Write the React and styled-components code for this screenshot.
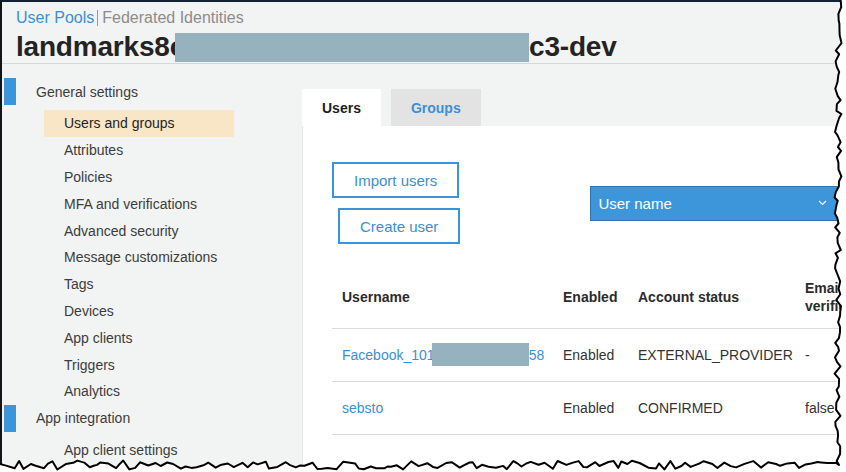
import React from "react";
import styled, { createGlobalStyle } from "styled-components";

const GlobalStyle = createGlobalStyle`
  html, body { margin: 0; padding: 0; background: #ffffff; }
  body { font-family: "Liberation Sans", Arial, Helvetica, sans-serif; }
  * { box-sizing: border-box; }
`;

const BLUE = "#3b8fd6";

const Stage = styled.div`
  position: relative;
  width: 846px;
  height: 472px;
  overflow: hidden;
  background: #ffffff;
`;

const Screen = styled.div`
  width: 846px;
  height: 472px;
  display: flex;
  flex-direction: column;
  background: #f2f3f3;
  border-left: 2px solid #111418;
  border-top: 2px solid #142033;
`;

const Header = styled.header`
  height: 62px;
  flex: none;
  padding: 6px 14px 0;
  border-bottom: 1px solid #d6d8d8;
`;

const Crumbs = styled.div`
  display: flex;
  align-items: center;
  height: 20px;
  font-size: 16px;
`;

const CrumbLink = styled.span`
  color: ${BLUE};
`;

const CrumbSep = styled.span`
  width: 1px;
  height: 16px;
  background: #9a9a9a;
  margin: 0 4px 0 3px;
`;

const CrumbMuted = styled.span`
  color: #8c8c8c;
`;

const Title = styled.h1`
  margin: 2px 0 0;
  display: flex;
  align-items: center;
  height: 34px;
  font-size: 28px;
  font-weight: 700;
  letter-spacing: -0.2px;
  color: #232323;
  white-space: nowrap;
`;

const Redact = styled.span`
  display: inline-block;
  flex: none;
  background: #97b2bf;
  width: ${(p) => p.$w}px;
  height: ${(p) => p.$h}px;
  margin-left: ${(p) => p.$ml || 0}px;
  vertical-align: middle;
`;

const Body = styled.div`
  flex: 1;
  display: grid;
  grid-template-columns: 300px 1fr;
  min-height: 0;
`;

const Sidebar = styled.nav`
  padding-top: 14px;
  display: flex;
  flex-direction: column;
`;

const SectionHead = styled.div`
  display: flex;
  align-items: center;
  height: 27px;
  margin-bottom: 5px;
  font-size: 14px;
  color: #3c3c3c;
`;

const Marker = styled.span`
  width: 12px;
  height: 27px;
  margin: 0 20px 0 2px;
  background: #3d95d9;
`;

const NavList = styled.ul`
  list-style: none;
  margin: 0;
  padding: 0 0 0 42px;
`;

const NavItem = styled.li`
  width: 190px;
  height: 26.8px;
  display: flex;
  align-items: center;
  padding-left: 20px;
  font-size: 14px;
  color: ${(p) => (p.$active ? "#1f1f1f" : "#3c3c3c")};
  background: ${(p) => (p.$active ? "#f9e6c7" : "transparent")};
`;

const Main = styled.main`
  padding-top: 25px;
  display: flex;
  flex-direction: column;
  min-width: 0;
`;

const Tabs = styled.div`
  display: flex;
  gap: 10px;
  height: 37px;
  flex: none;
`;

const Tab = styled.div`
  display: flex;
  align-items: center;
  padding: 0 20px;
  font-size: 14px;
  font-weight: 700;
  color: ${(p) => (p.$active ? "#1e1e1e" : BLUE)};
  background: ${(p) => (p.$active ? "#ffffff" : "#e4e3e4")};
`;

const Panel = styled.section`
  flex: 1;
  background: #ffffff;
  padding: 36px 0 0 30px;
  box-shadow: inset 1px 0 0 #e6e7e7;
  overflow: hidden;
`;

const Toolbar = styled.div`
  display: flex;
  align-items: center;
`;

const ButtonStack = styled.div`
  display: flex;
  flex-direction: column;
  align-items: flex-start;
  gap: 10px;
  flex: none;
`;

const OutlineButton = styled.button`
  height: 36px;
  padding: 0 20px;
  margin-left: ${(p) => p.$offset || 0}px;
  border: 2px solid #3d93d8;
  background: #ffffff;
  color: ${BLUE};
  font-family: inherit;
  font-size: 15px;
  white-space: nowrap;
`;

const Select = styled.div`
  margin-left: 130px;
  width: 260px;
  height: 35px;
  flex: none;
  display: flex;
  align-items: center;
  justify-content: space-between;
  padding: 0 16px 0 7px;
  background: #3d96d9;
  border: 1px solid #2f74b0;
  color: #ffffff;
  font-size: 15px;
`;

const Chevron = styled.svg`
  margin-right: 6px;
`;

const Table = styled.table`
  margin-top: 22px;
  border-collapse: collapse;
  table-layout: fixed;
  width: 540px;
  font-size: 14px;
  color: #333333;
`;

const Th = styled.th`
  width: ${(p) => p.$w}px;
  height: 62px;
  padding: 0 0 0 10px;
  text-align: left;
  font-weight: 700;
  line-height: 18px;
  color: #2b2b2b;
  border-bottom: 1px solid #dcdcdc;
  vertical-align: middle;
`;

const Td = styled.td`
  height: 53px;
  padding: 0 0 0 10px;
  border-bottom: 1px solid #dcdcdc;
  white-space: nowrap;
  vertical-align: middle;
  color: ${(p) => (p.$link ? BLUE : "#333333")};
`;

const UserCell = styled.span`
  display: inline-flex;
  align-items: center;
`;

const Torn = styled.svg`
  position: absolute;
  left: 0;
  top: 0;
  pointer-events: none;
`;

function rng(seed) {
  let s = seed;
  return () => {
    s = (s * 9301 + 49297) % 233280;
    return s / 233280;
  };
}

function buildEdge() {
  const r = rng(42);
  const right = [];
  for (let y = 0; y < 462; y += 3 + r() * 5) {
    right.push([838 + (r() - 0.5) * 7, y]);
  }
  right.push([839, 465]);
  const bottom = [];
  for (let x = 836; x > 0; x -= 3 + r() * 6) {
    bottom.push([x, 465 + (r() - 0.5) * 9]);
  }
  bottom.push([0, 464]);
  const line = [...right, ...bottom];
  const d = line.map((p, i) => `${i ? "L" : "M"}${p[0].toFixed(1)} ${p[1].toFixed(1)}`).join(" ");
  const fill = `M846 0 L${line[0][0].toFixed(1)} 0 ${d.replace("M", "L")} L0 472 L846 472 Z`;
  return { d, fill };
}

const nav = [
  "Attributes",
  "Policies",
  "MFA and verifications",
  "Advanced security",
  "Message customizations",
  "Tags",
  "Devices",
  "App clients",
  "Triggers",
  "Analytics",
];

export default function App() {
  const edge = buildEdge();
  return (
    <Stage>
      <GlobalStyle />
      <Screen>
        <Header>
          <Crumbs>
            <CrumbLink>User Pools</CrumbLink>
            <CrumbSep />
            <CrumbMuted>Federated Identities</CrumbMuted>
          </Crumbs>
          <Title>
            landmarks8c
            <Redact $w={354} $h={29} $ml={-10} />
            c3-dev
          </Title>
        </Header>
        <Body>
          <Sidebar>
            <SectionHead>
              <Marker />
              General settings
            </SectionHead>
            <NavList>
              <NavItem $active>Users and groups</NavItem>
              {nav.map((n) => (
                <NavItem key={n}>{n}</NavItem>
              ))}
            </NavList>
            <SectionHead>
              <Marker />
              App integration
            </SectionHead>
            <NavList>
              <NavItem>App client settings</NavItem>
            </NavList>
          </Sidebar>
          <Main>
            <Tabs>
              <Tab $active>Users</Tab>
              <Tab>Groups</Tab>
            </Tabs>
            <Panel>
              <Toolbar>
                <ButtonStack>
                  <OutlineButton>Import users</OutlineButton>
                  <OutlineButton $offset={6}>Create user</OutlineButton>
                </ButtonStack>
                <Select>
                  User name
                  <Chevron width="9" height="6" viewBox="0 0 9 6">
                    <polyline points="1,1 4.5,4.5 8,1" fill="none" stroke="#ffffff" strokeWidth="1.2" />
                  </Chevron>
                </Select>
              </Toolbar>
              <Table>
                <colgroup>
                  <col style={{ width: 221 }} />
                  <col style={{ width: 75 }} />
                  <col style={{ width: 167 }} />
                  <col style={{ width: 77 }} />
                </colgroup>
                <thead>
                  <tr>
                    <Th>Username</Th>
                    <Th>Enabled</Th>
                    <Th>Account status</Th>
                    <Th>Email verified</Th>
                  </tr>
                </thead>
                <tbody>
                  <tr>
                    <Td $link>
                      <UserCell>
                        Facebook_101
                        <Redact $w={97} $h={23} $ml={-3} />
                        58
                      </UserCell>
                    </Td>
                    <Td>Enabled</Td>
                    <Td>EXTERNAL_PROVIDER</Td>
                    <Td>-</Td>
                  </tr>
                  <tr>
                    <Td $link>sebsto</Td>
                    <Td>Enabled</Td>
                    <Td>CONFIRMED</Td>
                    <Td>false</Td>
                  </tr>
                </tbody>
              </Table>
            </Panel>
          </Main>
        </Body>
      </Screen>
      <Torn width="846" height="472" viewBox="0 0 846 472">
        <path d={edge.fill} fill="#ffffff" />
        <path d={edge.d} fill="none" stroke="#000000" strokeWidth="2" strokeLinejoin="round" />
      </Torn>
    </Stage>
  );
}
